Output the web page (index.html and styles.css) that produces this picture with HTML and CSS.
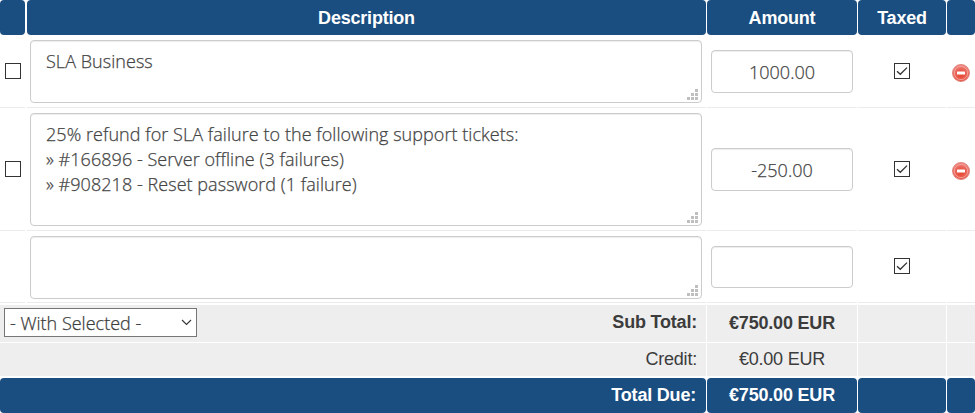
FILE: index.html
```
<!DOCTYPE html>
<html lang="en">
<head>
    <meta charset="UTF-8">
    <meta name="viewport" content="width=device-width, initial-scale=1.0">
    <title>Invoice Items</title>
    <link rel="stylesheet" href="styles.css">
</head>
<body>
    <!-- Shared icons -->
    <svg class="icons" width="0" height="0">
        <defs>
            <radialGradient id="red" cx="50%" cy="62%" r="60%">
                <stop offset="0" stop-color="#e8452f"/>
                <stop offset="0.6" stop-color="#ea6459"/>
                <stop offset="1" stop-color="#f0908a"/>
            </radialGradient>
        </defs>
        <symbol id="tick" viewBox="0 0 16 16">
            <path d="M3 8.2L6.3 11.3L13 4.6" fill="none" stroke="#333" stroke-width="1.3"/>
        </symbol>
        <symbol id="minus" viewBox="0 0 18 18">
            <circle cx="9" cy="9" r="8.5" fill="url(#red)" stroke="#d9736a" stroke-width="0.8"/>
            <circle cx="9" cy="9" r="6.6" fill="none" stroke="#f5aaa3" stroke-width="0.8"/>
            <rect x="5" y="7.5" width="8" height="3" rx="0.6" fill="#fff"/>
        </symbol>
        <symbol id="grip" viewBox="0 0 11 11">
            <path d="M8 0h3v3h-3zM4 4h3v3h-3zM8 4h3v3h-3zM0 8h3v3h-3zM4 8h3v3h-3zM8 8h3v3h-3z" fill="#bfbfbf"/>
        </symbol>
    </svg>

    <form class="invoice">
        <div class="row head">
            <div class="cell"></div>
            <div class="cell">Description</div>
            <div class="cell">Amount</div>
            <div class="cell">Taxed</div>
            <div class="cell"></div>
        </div>

        <!-- Items -->
        <div class="row item">
            <div class="cell select"><input type="checkbox" class="check"></div>
            <div class="cell description">
                <textarea class="field">SLA Business</textarea>
                <svg class="grip"><use href="#grip"/></svg>
            </div>
            <div class="cell amount"><input type="text" class="field" value="1000.00"></div>
            <div class="cell taxed">
                <input type="checkbox" class="check" checked>
                <svg class="tick"><use href="#tick"/></svg>
            </div>
            <div class="cell remove"><svg class="minus"><use href="#minus"/></svg></div>
        </div>
        <div class="row item tall">
            <div class="cell select"><input type="checkbox" class="check"></div>
            <div class="cell description">
                <textarea class="field">25% refund for SLA failure to the following support tickets:
» #166896 - Server offline (3 failures)
» #908218 - Reset password (1 failure)</textarea>
                <svg class="grip"><use href="#grip"/></svg>
            </div>
            <div class="cell amount"><input type="text" class="field" value="-250.00"></div>
            <div class="cell taxed">
                <input type="checkbox" class="check" checked>
                <svg class="tick"><use href="#tick"/></svg>
            </div>
            <div class="cell remove"><svg class="minus"><use href="#minus"/></svg></div>
        </div>
        <div class="row item new">
            <div class="cell"></div>
            <div class="cell description">
                <textarea class="field"></textarea>
                <svg class="grip"><use href="#grip"/></svg>
            </div>
            <div class="cell amount"><input type="text" class="field"></div>
            <div class="cell taxed">
                <input type="checkbox" class="check" checked>
                <svg class="tick"><use href="#tick"/></svg>
            </div>
            <div class="cell"></div>
        </div>

        <!-- Totals -->
        <div class="row total subtotal">
            <div class="cell label">
                <div class="dropdown">
                    <span>- With Selected -</span>
                    <svg width="11" height="7" viewBox="0 0 11 7"><path d="M1 1L5.5 5.5L10 1" fill="none" stroke="#333" stroke-width="1.1"/></svg>
                </div>
                <span>Sub Total:</span>
            </div>
            <div class="cell">€750.00 EUR</div>
            <div class="cell"></div>
            <div class="cell"></div>
        </div>
        <div class="row total credit">
            <div class="cell label"><span>Credit:</span></div>
            <div class="cell">€0.00 EUR</div>
            <div class="cell"></div>
            <div class="cell"></div>
        </div>
        <div class="row total due">
            <div class="cell label"><span>Total Due:</span></div>
            <div class="cell">€750.00 EUR</div>
            <div class="cell"></div>
            <div class="cell"></div>
        </div>
    </form>
</body>
</html>
```
FILE: styles.css
```
* {
    box-sizing: border-box;
    margin: 0;
    padding: 0;
}

body {
    font-family: "Liberation Sans", Arial, sans-serif;
    font-size: 18px;
    color: #3c3c3c;
    background: #fff;
    overflow: hidden;
}
.icons {
    display: block;
}
.invoice {
    width: 975px;
}
.row {
    display: grid;
    grid-template-columns: 26px 679px 150px 88px 28px;
    column-gap: 1px;
}
.cell {
    display: flex;
    align-items: center;
    justify-content: center;
}
.head {
    height: 35px;
}
.head .cell {
    padding-top: 2px;
    letter-spacing: -0.2px;
}
.head .cell, .due .cell {
    background: #1a4d80;
    color: #fff;
    font-weight: bold;
    border-radius: 4px;
}
.head .cell:first-child, .item .cell:first-child {
    margin-right: 1px;
}

/* items */
.item {
    height: 73px;
}
.tall {
    height: 123px;
}
.new {
    height: 72px;
}
.item .cell {
    position: relative;
    padding-top: 1px;
    border-bottom: 1px solid #ebebeb;
}
.item .select, .item .taxed {
    padding-top: 0;
    padding-bottom: 1px;
}
.item .description {
    align-items: flex-start;
    padding: 5px 4px 0 3px;
}
.field {
    width: 100%;
    border: 1px solid #ccc;
    border-radius: 4px;
    box-shadow: inset 0 1px 1px rgba(0, 0, 0, 0.075);
    background: #fff;
    color: #444;
    font-family: "Open Sans", sans-serif;
    font-size: 18px;
    font-weight: 300;
    -webkit-text-stroke: 0.25px #444;
}
textarea.field {
    display: block;
    height: 63px;
    padding: 8px 15px;
    line-height: 25px;
    letter-spacing: 0.05px;
    resize: none;
    overflow: hidden;
}
.tall textarea.field {
    height: 113px;
}
.amount input {
    width: 142px;
    height: 43px;
    text-align: center;
}
.new .amount input {
    height: 42px;
}
.grip {
    position: absolute;
    right: 8px;
    bottom: 7px;
    width: 11px;
    height: 11px;
}
.new .grip {
    bottom: 6px;
}
.check {
    appearance: none;
    width: 16px;
    height: 16px;
    border: 1px solid #333;
    background: #fff;
}
.tick {
    position: absolute;
    width: 16px;
    height: 16px;
}
.minus {
    width: 18px;
    height: 18px;
    margin-top: 3px;
}

/* totals */
.total {
    grid-template-columns: 706px 150px 88px 28px;
}
.total .cell {
    background: #eee;
    letter-spacing: -0.2px;
}
.total .label {
    justify-content: flex-end;
    padding-right: 9px;
}
.subtotal {
    height: 37px;
    margin-top: 2px;
    font-weight: bold;
}
.subtotal .label {
    justify-content: space-between;
    padding-left: 4px;
    padding-bottom: 2px;
}
.credit {
    height: 33px;
    margin-top: 1px;
}
.due {
    height: 35px;
    margin-top: 2px;
}
.due .cell {
    background: #1a4d80;
}
.due .label {
    padding-right: 10px;
}
.dropdown {
    display: flex;
    align-items: center;
    justify-content: space-between;
    width: 193px;
    height: 29px;
    padding: 0 4px 0 5px;
    border: 1px solid #767676;
    background: #fff;
    font-family: "Open Sans", sans-serif;
    font-weight: 300;
    letter-spacing: 0;
    -webkit-text-stroke: 0.25px #3c3c3c;
}
```
